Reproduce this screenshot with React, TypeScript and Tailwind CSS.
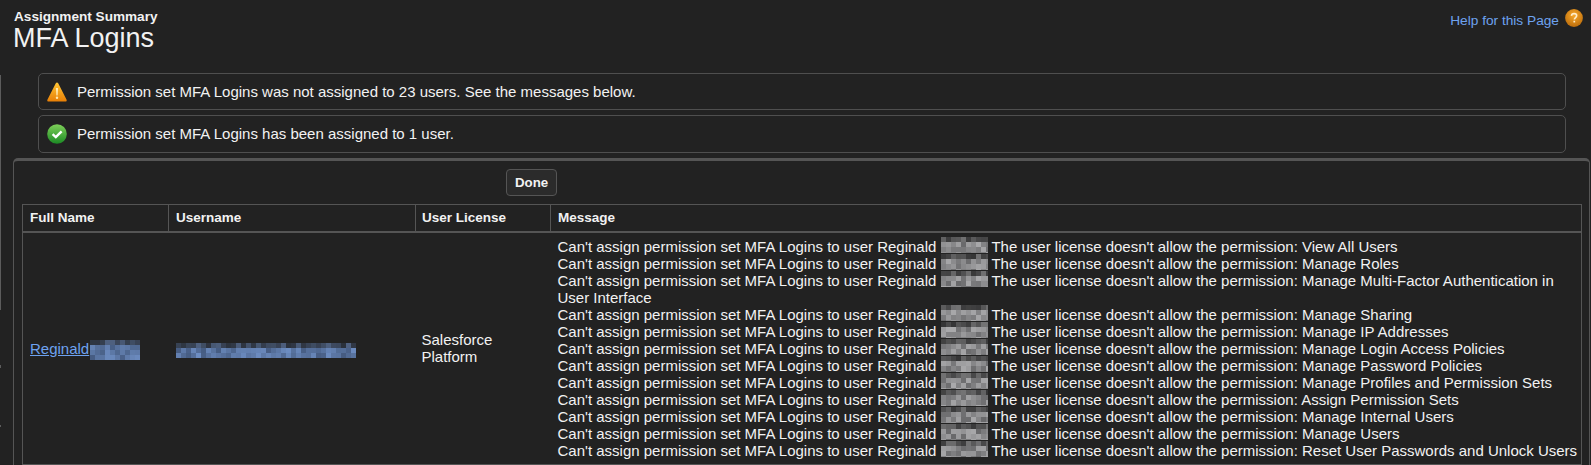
const FONT = "font-['Liberation_Sans',Arial,sans-serif]";

const permissions = [
  'View All Users',
  'Manage Roles',
  'Manage Multi-Factor Authentication in User Interface',
  'Manage Sharing',
  'Manage IP Addresses',
  'Manage Login Access Policies',
  'Manage Password Policies',
  'Manage Profiles and Permission Sets',
  'Assign Permission Sets',
  'Manage Internal Users',
  'Manage Users',
  'Reset User Passwords and Unlock Users',
];

// pixelated redaction, same look as the blurred names in the picture
function Mosaic({ width, height, seed, tint, className }: { width: number; height: number; seed: number; tint: 'gray' | 'blue'; className: string }) {
  const cell = 5;
  const rows = Math.ceil(height / cell);
  const rects = [];
  let n = seed * 7919 + 13;
  for (let r = 0; r < rows; r++) {
    for (let x = 0; x < width; x += cell) {
      n = (n * 1103515245 + 12345) & 0x7fffffff;
      const v = ((n >> 8) % 100) / 100;
      // top row fades into the background, the text body sits below it
      const fade = r === 0 ? 0.25 + v * 0.35 : 1;
      const base =
        tint === 'gray'
          ? [105 + v * 65, 105 + v * 65, 107 + v * 65]
          : [70 + v * 40, 92 + v * 50, 130 + v * 65];
      const mix = (c: number) => Math.round(34 + (c - 34) * fade);
      rects.push(<rect key={`${x}-${r}`} x={x} y={r * cell} width={cell} height={cell} fill={`rgb(${mix(base[0])},${mix(base[1])},${mix(base[2])})`} />);
    }
  }
  return (
    <svg width={width} height={height} className={`inline-block ${className}`} shapeRendering="crispEdges">
      {rects}
    </svg>
  );
}

function WarningIcon() {
  return (
    <svg width="20" height="20" viewBox="0 0 20 20" className="shrink-0">
      <defs>
        <linearGradient id="warn" x1="0" y1="0" x2="0" y2="1">
          <stop offset="0" stopColor="#ffc533" />
          <stop offset="1" stopColor="#e87f06" />
        </linearGradient>
      </defs>
      <path d="M10 .4c.5 0 .9.3 1.2.8l8.4 16.6c.4.8-.1 1.8-1 1.8H1.4c-.9 0-1.4-1-1-1.8L8.8 1.2c.3-.5.7-.8 1.2-.8z" fill="url(#warn)" />
      <path d="M8.9 6h2.2l-.5 7.4H9.4z" fill="#ffe9b0" />
      <circle cx="10" cy="15.8" r="1.2" fill="#ffe9b0" />
    </svg>
  );
}

function CheckIcon() {
  return (
    <svg width="20" height="20" viewBox="0 0 20 20" className="shrink-0">
      <defs>
        <linearGradient id="ok" x1="0" y1="0" x2="0" y2="1">
          <stop offset="0" stopColor="#7fd05a" />
          <stop offset="1" stopColor="#1b8a24" />
        </linearGradient>
      </defs>
      <circle cx="10" cy="10" r="9.8" fill="url(#ok)" />
      <path d="M5.6 10.2l3.2 3 5.8-5.8" fill="none" stroke="#fff" strokeWidth="2.4" />
    </svg>
  );
}

function HelpIcon() {
  return (
    <svg width="18" height="18" viewBox="0 0 19 19" className="shrink-0">
      <defs>
        <radialGradient id="help" cx="0.5" cy="0.35" r="0.7">
          <stop offset="0" stopColor="#f9a92a" />
          <stop offset="1" stopColor="#b8690a" />
        </radialGradient>
      </defs>
      <circle cx="9.5" cy="9.5" r="9.4" fill="url(#help)" />
      <path d="M6.8 7.2c.2-1.6 1.3-2.3 2.8-2.3 1.6 0 2.7.9 2.7 2.2 0 1.9-2.4 1.9-2.4 3.9" fill="none" stroke="#ffeecb" strokeWidth="1.7" />
      <rect x="8.9" y="12.4" width="1.8" height="1.8" fill="#ffeecb" />
    </svg>
  );
}

export default function App() {
  return (
    <div className={`w-[1591px] h-[465px] overflow-hidden bg-[#222222] text-[15px] leading-[17px] text-[#f2f2f2] ${FONT}`}>
      <div className="flex justify-between pl-[14px] pr-[8px] h-[73px]">
        <div className="pt-[9px]">
          <div className="text-[13.6px] leading-[15px] font-bold">Assignment Summary</div>
          <h1 className="text-[27px] leading-[28px] -ml-px">MFA Logins</h1>
        </div>
        <div className="flex items-start gap-[6px] pt-[9px]">
          <a className="text-[13.7px] text-[#6ea2f0] mt-[3px]">Help for this Page</a>
          <HelpIcon />
        </div>
      </div>

      <div className="flex">
        <div className="w-[13px] shrink-0 pt-[2px]">
          <div className="w-px h-[235px] bg-[#5c5c5c]" />
          <div className="w-px h-[3px] mt-[55px] bg-[#5c5c5c]" />
          <div className="w-px h-[2px] mt-[57px] bg-[#5c5c5c]" />
        </div>
        <div className="flex-1 min-w-0 mr-px">
          <div className="ml-[25px] mr-[24px]">
            <div className="flex items-center gap-[10px] h-[37px] pl-[8px] border border-[#4f4f4f] rounded-[5px]">
              <WarningIcon />
              <span>Permission set MFA Logins was not assigned to 23 users. See the messages below.</span>
            </div>
            <div className="flex items-center gap-[10px] h-[38px] mt-[5px] pl-[8px] border border-[#4f4f4f] rounded-[5px]">
              <CheckIcon />
              <span className="-mt-[2px]">Permission set MFA Logins has been assigned to 1 user.</span>
            </div>
          </div>

          <div className="mt-[5px] border-t-[3px] border-x border-[#555555] rounded-t-[5px] pl-[8px]">
            <div className="h-[43px] pt-[8px] pl-[484px]">
              <button className="h-[27px] px-[8px] font-bold text-[13.3px] text-[#f2f2f2] bg-[#2b2b2b] border border-[#555555] rounded-[4px]">Done</button>
            </div>
            <table className="w-[1560px] table-fixed border-collapse border border-[#555555]">
              <thead>
                <tr className="h-[27px] border-b-2 border-[#555555] text-left text-[13.5px]">
                  <th className="w-[146px] pl-[7px] pr-[6px] border-r border-[#555555] font-bold">Full Name</th>
                  <th className="w-[247px] pl-[7px] pr-[6px] border-r border-[#555555] font-bold">Username</th>
                  <th className="w-[135px] px-[6px] border-r border-[#555555] font-bold">User License</th>
                  <th className="pl-[7px] pr-[6px] font-bold">Message</th>
                </tr>
              </thead>
              <tbody>
                <tr>
                  <td className="pl-[7px] pr-[6px] pt-[2px] whitespace-nowrap">
                    <a className="text-[#6ea2f0] underline">Reginald</a>
                    <Mosaic width={50} height={20} seed={1} tint="blue" className="ml-px align-[-5px] -mt-[5px] -mb-px" />
                  </td>
                  <td className="pl-[7px] pr-[6px] pt-[2px]">
                    <Mosaic width={180} height={15} seed={2} tint="blue" className="align-[-4px]" />
                  </td>
                  <td className="px-[6px]">Salesforce Platform</td>
                  <td className="pl-[7px] pr-[1px] pt-[5px] pb-[5px]">
                    {permissions.map((p, i) => (
                      <div key={p}>
                        Can't assign permission set MFA Logins to user Reginald <Mosaic width={47} height={16} seed={i + 3} tint="gray" className="align-[-1px] -mt-[3px]" /> The user license doesn't allow the permission: {p}
                      </div>
                    ))}
                  </td>
                </tr>
              </tbody>
            </table>
          </div>
        </div>
      </div>
    </div>
  );
}
